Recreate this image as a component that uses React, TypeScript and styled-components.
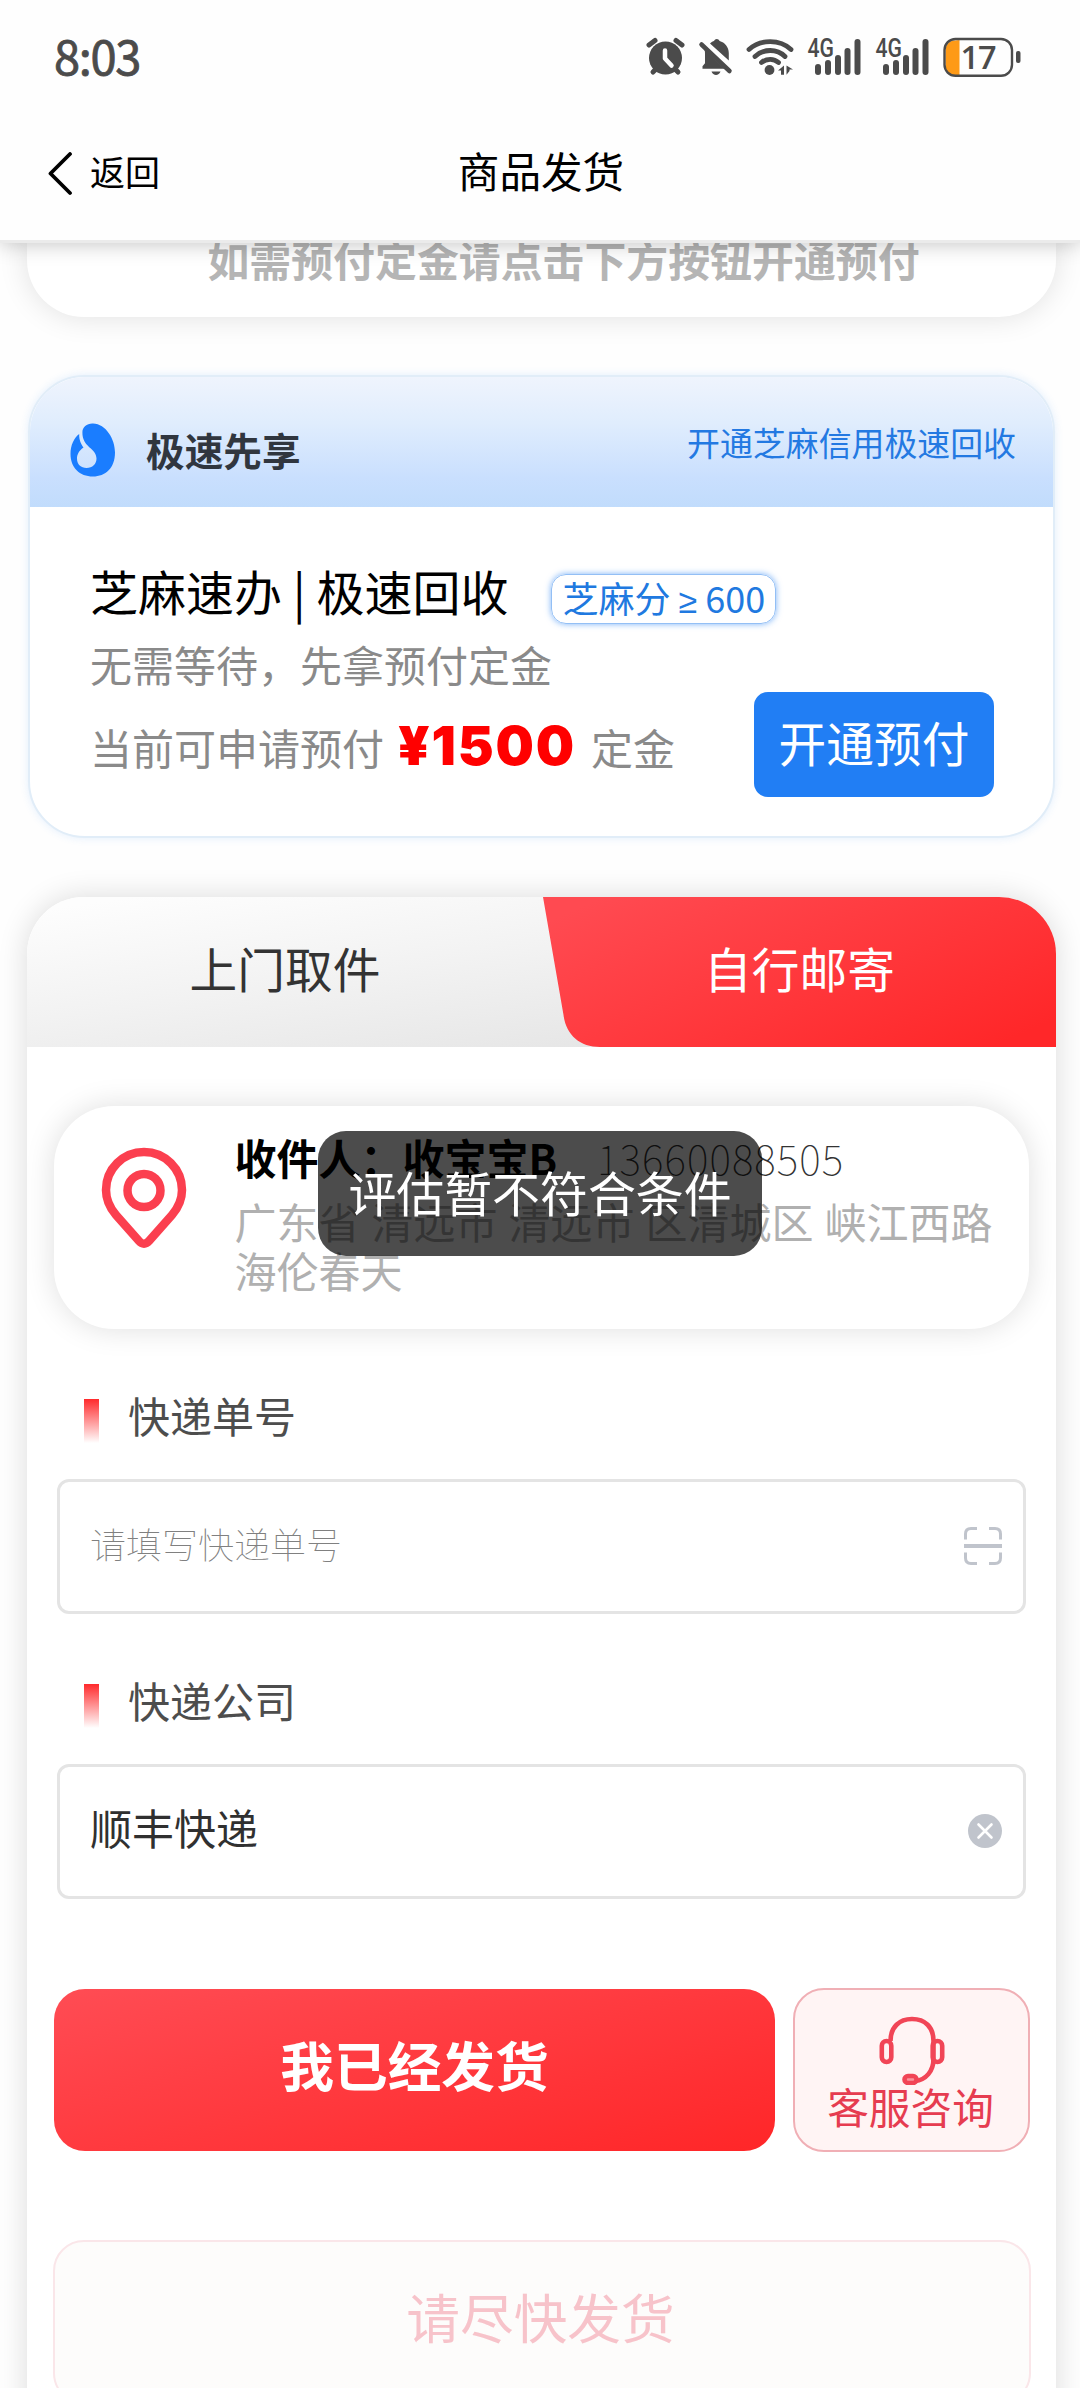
import React from "react";
import styled, { createGlobalStyle } from "styled-components";

const GlobalStyle = createGlobalStyle`
  * { box-sizing: border-box; }
  html, body { margin: 0; padding: 0; background: #fefefe; }
  body {
    font-family: "Noto Sans CJK SC", "Liberation Sans", sans-serif;
    color: #000;
    overflow: hidden;
  }
`;

const Screen = styled.div`
  width: 1080px;
  height: 2388px;
  overflow: hidden;
  display: flex;
  flex-direction: column;
  background: #fefefe;
`;

/* ---------- top area ---------- */

const TopArea = styled.header`
  position: relative;
  z-index: 2;
  flex: none;
  height: 240px;
  background: #fefefe;
  box-shadow: 0 3px 0 #ebebeb, 0 4px 20px rgba(0, 0, 0, 0.24);
`;

const StatusBar = styled.div`
  height: 114px;
  display: flex;
  align-items: center;
  justify-content: space-between;
  padding: 0 59px 0 54px;
`;

const Clock = styled.span`
  margin-top: -4px;
  font-size: 47px;
  font-weight: 400;
  line-height: 60px;
  letter-spacing: -1.3px;
  color: #4b4b4b;
  -webkit-text-stroke: 0.8px #4b4b4b;
`;

const StatusIcons = styled.svg`
  display: block;
  width: 376px;
  height: 60px;
`;

const NavBar = styled.nav`
  height: 119px;
  display: grid;
  grid-template-columns: 1fr auto 1fr;
  align-items: center;
  padding: 0 46px;
`;

const Back = styled.div`
  display: flex;
  align-items: center;
  gap: 16px;
  font-size: 35px;
  line-height: 50px;
  svg { display: block; }
  span { margin-top: -6px; }
`;

const PageTitle = styled.h1`
  margin: -7px 0 0 2px;
  font-size: 41.6px;
  font-weight: 400;
  line-height: 60px;
`;

/* ---------- content ---------- */

const Content = styled.main`
  flex: none;
  padding: 0 24px 0 27px;
  display: flex;
  flex-direction: column;
`;

const Notice = styled.section`
  height: 77px;
  border-radius: 0 0 57px 57px;
  background: #fff;
  box-shadow: 0 0 30px rgba(0, 0, 0, 0.12);
`;

const NoticeText = styled.p`
  margin: 0 0 0 44px;
  text-align: center;
  font-size: 41.9px;
  font-weight: 700;
  line-height: 38px;
  color: #b5b5b5;
`;

const Credit = styled.section`
  margin: 58px 1px 0;
  height: 463px;
  border: 2px solid #e1edf8;
  border-radius: 57px;
  background: #fff;
  box-shadow: 0 0 8px rgba(60, 140, 240, 0.14);
  overflow: hidden;
`;

const CreditHead = styled.div`
  height: 130px;
  display: flex;
  align-items: center;
  padding: 16px 37px 0 40px;
  background: linear-gradient(180deg, #eff4fd 0%, #e0edfd 35%, #c9dffe 78%, #c1dcfc 100%);
`;

const CreditName = styled.strong`
  margin: -2px 0 0 30px;
  flex: 1;
  font-size: 38.7px;
  font-weight: 700;
  line-height: 50px;
  color: #30363f;
`;

const CreditLink = styled.span`
  margin-top: -16px;
  font-size: 32.9px;
  line-height: 44px;
  color: #2379e2;
`;

const CreditBody = styled.div`
  padding: 53px 59px 0 60px;
  display: grid;
  grid-template-columns: 1fr auto;
`;

const CreditTitleRow = styled.div`
  grid-column: 1 / -1;
  display: flex;
  align-items: center;
  height: 60px;
  font-size: 48px;
  line-height: 60px;
`;

const ScoreBadge = styled.span`
  margin: 18px 0 0 43px;
  height: 50px;
  padding: 0 10px 0 10px;
  border-radius: 15px;
  border: 1px solid #93bff5;
  box-shadow: 0 0 6px rgba(33, 126, 244, 0.6);
  font-size: 36px;
  line-height: 45px;
  color: #2079e0;
`;

const Sign = styled.span`
  font-family: "Noto Sans", sans-serif;
  font-size: 34px;
  line-height: 40px;
`;

const CreditText = styled.div`
  color: #8a8a8a;
  font-size: 42px;
`;

const Line = styled.p<{ $gap?: number }>`
  margin: ${(p) => p.$gap ?? 0}px 0 0;
  height: 60px;
  line-height: 60px;
  white-space: nowrap;
  display: flex;
`;

const Amount = styled.b`
  margin: 0 15px 0 14px;
  font-family: Inter, "Liberation Sans", sans-serif;
  font-size: 54px;
  font-weight: 900;
  line-height: 57px;
  letter-spacing: 1.8px;
  color: #ff0000;
`;

const PrepayButton = styled.button`
  margin: 72px 0 0;
  width: 240px;
  height: 105px;
  padding: 0 0 6px;
  border: 0;
  border-radius: 14px;
  background: #217ef4;
  color: #fff;
  font: 400 47.7px/60px "Noto Sans CJK SC", sans-serif;
`;

/* ---------- shipping card ---------- */

const Shipping = styled.section`
  margin-top: 59px;
  height: 1600px;
  border-radius: 57px 57px 0 0;
  background: #fff;
  box-shadow: 0 0 30px rgba(0, 0, 0, 0.14);
`;

const Tabs = styled.div`
  position: relative;
  display: grid;
  grid-template-columns: 516px 513px;
  height: 150px;
  border-radius: 57px 57px 0 0;
  overflow: hidden;
  background: linear-gradient(172deg, #fdfdfd 5%, #f2f2f2 42%, #dfdfdf 100%);
`;

const TabShape = styled.svg`
  position: absolute;
  top: 0;
  right: 0;
`;

const Tab = styled.div<{ $active?: boolean }>`
  position: relative;
  text-align: center;
  font-size: 47.7px;
  line-height: 60px;
  padding-top: 41px;
  color: ${(p) => (p.$active ? "#fff" : "#333")};
`;

const Form = styled.div`
  padding: 59px 27px 0;
`;

const Address = styled.div`
  height: 223px;
  border-radius: 60px;
  background: #fff;
  box-shadow: 0 0 30px rgba(0, 0, 0, 0.13);
  display: flex;
  padding: 19px 0 0 46px;
`;

const PinBox = styled.div`
  flex: none;
  width: 134.5px;
  padding-top: 20px;
  svg { display: block; }
`;

const Recipient = styled.div`
  display: flex;
  align-items: center;
  height: 64px;
  font-size: 42px;
  line-height: 64px;
  white-space: nowrap;
`;

const Phone = styled.span`
  margin-left: 40px;
  font-size: 41px;
  font-weight: 100;
  letter-spacing: 1.1px;
  color: #333;
`;

const AddressText = styled.p`
  margin: 7px 0 0;
  width: 765px;
  font-size: 42px;
  line-height: 49px;
  word-spacing: 1.6px;
  color: #b0b0b0;
`;

const FieldLabel = styled.div<{ $top: number }>`
  margin: ${(p) => p.$top}px 0 0 30px;
  height: 60px;
  display: flex;
  align-items: center;
  gap: 29px;
  font-size: 42px;
  line-height: 60px;
  color: #4d4d4d;
  &::before {
    content: "";
    width: 15px;
    height: 44px;
    margin-top: 5px;
    background: linear-gradient(180deg, #ff2a2c, rgba(255, 42, 44, 0));
  }
  span { margin-top: -7px; }
`;

const Field = styled.div`
  margin: 31px 3px 0;
  height: 135px;
  border: 3px solid #e4e4e4;
  border-radius: 12px;
  display: flex;
  align-items: center;
  justify-content: space-between;
  padding: 0 21px 2px 30px;
  svg { display: block; }
`;

const Placeholder = styled.span`
  font-size: 36px;
  font-weight: 100;
  line-height: 50px;
  margin-top: -5px;
  color: #808080;
`;

const Value = styled.span`
  font-size: 42px;
  line-height: 60px;
  margin-top: -7px;
  color: #303030;
`;

const Actions = styled.div`
  margin-top: 89px;
  display: flex;
  justify-content: space-between;
  align-items: center;
  height: 164px;
  margin-right: -1px;
`;

const ShippedButton = styled.button`
  width: 721px;
  height: 162px;
  border: 0;
  padding: 0 0 12px;
  border-radius: 31px;
  background: linear-gradient(165deg, #ff4c54 0%, #ff2628 100%);
  color: #fff;
  font: 700 53.7px/70px "Noto Sans CJK SC", sans-serif;
`;

const ServiceButton = styled.button`
  width: 237px;
  height: 164px;
  border: 2px solid #f0afb5;
  border-radius: 31px;
  padding: 25px 0 0;
  background: #fff4f4;
  display: flex;
  flex-direction: column;
  align-items: center;
  color: #e63c50;
  font: 400 41.7px/52px "Noto Sans CJK SC", sans-serif;
  svg { display: block; flex: none; }
  span { margin: -5px 2px 0 0; }
`;

const Reminder = styled.div`
  margin: 88px -2px 0 -1px;
  height: 164px;
  border: 2px solid #fae6e9;
  border-radius: 31px;
  background: #fdfcfb;
  padding: 36px 3px 0 0;
  text-align: center;
  font-size: 53.7px;
  line-height: 76px;
  color: #f7c3ca;
`;

const Toast = styled.div`
  position: fixed;
  z-index: 5;
  left: 318px;
  top: 1131px;
  width: 444px;
  height: 125px;
  border-radius: 28px;
  background: rgba(0, 0, 0, 0.7);
  color: #fff;
  text-align: center;
  font-size: 47.9px;
  line-height: 120px;
  white-space: nowrap;
`;

const SignalText = styled.text`
  font-family: Roboto, "Liberation Sans", sans-serif;
  font-size: 25px;
  font-weight: 500;
`;

const BatteryText = styled.text`
  font-family: "Open Sans", "Liberation Sans", sans-serif;
  font-size: 32.5px;
  font-weight: 600;
`;

const ink = "#4b4b4b";

function Signal({ x }: { x: number }) {
  const bars = [
    [8, 27, 11],
    [18, 23, 15],
    [28, 18, 20],
    [37.5, 11, 27],
    [47.5, 2, 36],
  ];
  return (
    <g transform={`translate(${x} 0)`}>
      <SignalText x="0.5" y="20" fill={ink} textLength="26.5" lengthAdjust="spacingAndGlyphs">4G</SignalText>
      {bars.map(([bx, by, h]) => (
        <rect key={bx} x={bx} y={by} width="6" height={h} rx="3" fill={ink} />
      ))}
    </g>
  );
}

/* viewBox starts at the alarm icon's left edge */
function StatusGlyphs() {
  return (
    <StatusIcons viewBox="645 27 376 60">
      <g stroke={ink} strokeWidth="5" strokeLinecap="round" fill="none">
        <path d="M649 45l6-4.500M682 45l-6-4.500M653 72l5-5M678 72l-5-5" />
      </g>
      <circle cx="665.500" cy="58" r="16.500" fill={ink} />
      <path d="M665 50.500v8l6.500 7" stroke="#fff" strokeWidth="4.500" fill="none" strokeLinecap="round" strokeLinejoin="round" />

      <path d="M710 43.500c1.500-1.500 3-2.200 4-2.400 1-2.800 4.600-2.800 5.600 0 5 1.400 9.200 6 9.200 12v7.500z" fill={ink} />
      <path d="M703.500 48.500l21 20.300H702.500v-2.500l2.500-3V54c0-2 0-4-1.500-5.500z" fill={ink} />
      <path d="M711.500 71.500h9c-1.500 4.500-7.500 4.500-9 0z" fill={ink} />
      <path d="M701.500 44.500l28 26.500" stroke={ink} strokeWidth="4.500" strokeLinecap="round" />

      <g stroke={ink} strokeWidth="4.800" strokeLinecap="round" fill="none">
        <path d="M749 49.500c11.500-10.500 31-10.500 42 0" />
        <path d="M755 56.500c8.500-8 22-8 30 0" />
        <path d="M761.500 62.500c5-4.300 12.500-4.300 17 0" />
      </g>
      <circle cx="769.500" cy="70" r="4.900" fill={ink} />
      <path d="M778 70.500l6-5v9.200h-3v-4.200zM786.500 65.500l6.500 4-3.500 0v1.500l-3 3.700z" fill={ink} />

      <g transform="translate(0 37)">
        <Signal x={807} />
        <Signal x={875} />
      </g>

      <path d="M959.500 40v35h-4.500c-6 0-9.500-4-9.500-9.500v-15c0-5.500 3.500-10 9.500-10z" fill="#fe9a17" />
      <rect x="944.500" y="39" width="67.500" height="36.800" rx="11" fill="none" stroke={ink} strokeWidth="2.400" />
      <rect x="1016" y="51" width="4.500" height="12" rx="2" fill={ink} />
      <BatteryText x="960.500" y="69" fill={ink} textLength="36" lengthAdjust="spacing">17</BatteryText>
    </StatusIcons>
  );
}

export default function App() {
  return (
    <>
      <GlobalStyle />
      <Screen>
        <TopArea>
          <StatusBar>
            <Clock>8:03</Clock>
            <StatusGlyphs />
          </StatusBar>
          <NavBar>
            <Back>
              <svg width="28" height="44" viewBox="0 0 28 44" fill="none">
                <path d="M24 2L4.500 21.500L24 41" stroke="#000" strokeWidth="3.800" strokeLinecap="round" strokeLinejoin="round" />
              </svg>
              <span>返回</span>
            </Back>
            <PageTitle>商品发货</PageTitle>
          </NavBar>
        </TopArea>

        <Content>
          <Notice>
            <NoticeText>如需预付定金请点击下方按钮开通预付</NoticeText>
          </Notice>

          <Credit>
            <CreditHead>
              <svg width="46" height="54" viewBox="0 0 46 54">
                <path
                  d="M23 0.500C36 1 45 16 45 29.500C45 45 35.500 53.500 23 53.500C9.500 53.500 0.500 44.500 0.500 31C0.500 22.500 4 14.500 9.200 11C9 17 11 21 13.500 24.500C8.500 28 7 32 7 35.500C7 41.500 11 45 16.500 45C22.500 45 26.500 41 26.500 35.500C26.500 25 12 24.500 12.400 9C12.500 4 17 0.200 23 0.500Z"
                  fill="#1a7dff"
                />
              </svg>
              <CreditName>极速先享</CreditName>
              <CreditLink>开通芝麻信用极速回收</CreditLink>
            </CreditHead>
            <CreditBody>
              <CreditTitleRow>
                <span>芝麻速办 | 极速回收</span>
                <ScoreBadge>
                  芝麻分 <Sign>≥</Sign> 600
                </ScoreBadge>
              </CreditTitleRow>
              <CreditText>
                <Line $gap={14}>无需等待，先拿预付定金</Line>
                <Line $gap={23}>
                  <span>当前可申请预付</span>
                  <Amount>¥1500</Amount>
                  <span>定金</span>
                </Line>
              </CreditText>
              <PrepayButton>开通预付</PrepayButton>
            </CreditBody>
          </Credit>

          <Shipping>
            <Tabs>
              <TabShape width="513" height="150" viewBox="0 0 513 150">
                <defs>
                  <linearGradient id="tabRed" gradientUnits="userSpaceOnUse" x1="150" y1="-40" x2="270" y2="230">
                    <stop offset="0" stopColor="#ff4a51" />
                    <stop offset="1" stopColor="#ff2729" />
                  </linearGradient>
                </defs>
                <path d="M0 0H513V150H57C37 150 23 138 20.500 118Z" fill="url(#tabRed)" />
              </TabShape>
              <Tab>上门取件</Tab>
              <Tab $active>自行邮寄</Tab>
            </Tabs>

            <Form>
              <Address>
                <PinBox>
                  <svg width="88" height="104" viewBox="0 0 88 104" fill="none" stroke="#fb3f4f" strokeWidth="8.500">
                    <path d="M44 7C23 7 6 24 6 45C6 55 10 63 16 70L39 96C42 99.500 46 99.500 49 96L72 70C78 63 82 55 82 45C82 24 65 7 44 7Z" strokeLinejoin="round" />
                    <circle cx="44" cy="45.500" r="16.500" />
                  </svg>
                </PinBox>
                <div>
                  <Recipient>
                    <b>收件人：收宝宝B</b>
                    <Phone>13660088505</Phone>
                  </Recipient>
                  <AddressText>广东省 清远市 清远市 区清城区 峡江西路海伦春天</AddressText>
                </div>
              </Address>

              <FieldLabel $top={59}>
                <span>快递单号</span>
              </FieldLabel>
              <Field>
                <Placeholder>请填写快递单号</Placeholder>
                <svg width="38" height="38" viewBox="0 0 38 38" fill="none" stroke="#c0c4cc" strokeWidth="3">
                  <path d="M1.500 12.500V7C1.500 3.500 3.500 1.500 7 1.500H13M25 1.500H31C34.500 1.500 36.500 3.500 36.500 7V12.500M36.500 25.500V31C36.500 34.500 34.500 36.500 31 36.500H25M13 36.500H7C3.500 36.500 1.500 34.500 1.500 31V25.500" />
                  <path d="M0 19H38" strokeWidth="3.800" />
                </svg>
              </Field>

              <FieldLabel $top={59}>
                <span>快递公司</span>
              </FieldLabel>
              <Field>
                <Value>顺丰快递</Value>
                <svg width="34" height="34" viewBox="0 0 34 34">
                  <circle cx="17" cy="17" r="17" fill="#c0c4cc" />
                  <path d="M10.500 10.500l13 13M23.500 10.500l-13 13" stroke="#fff" strokeWidth="2.600" strokeLinecap="round" />
                </svg>
              </Field>

              <Actions>
                <ShippedButton>我已经发货</ShippedButton>
                <ServiceButton>
                  <svg width="66" height="70" viewBox="0 0 66 70" fill="none" stroke="#f14556" strokeWidth="4.600">
                    <path d="M11.500 26C11.500 12 20.500 4 33 4C46 4 54.500 12 54.500 26V44C54.500 56 47 65 36 66" />
                    <rect x="2.800" y="26" width="9.500" height="21" rx="4.700" />
                    <rect x="53.700" y="26" width="9.500" height="21" rx="4.700" />
                    <rect x="25.500" y="61" width="12" height="7" rx="3.500" fill="#f8949d" />
                  </svg>
                  <span>客服咨询</span>
                </ServiceButton>
              </Actions>

              <Reminder>请尽快发货</Reminder>
            </Form>
          </Shipping>
        </Content>
        <Toast>评估暂不符合条件</Toast>
      </Screen>
    </>
  );
}
